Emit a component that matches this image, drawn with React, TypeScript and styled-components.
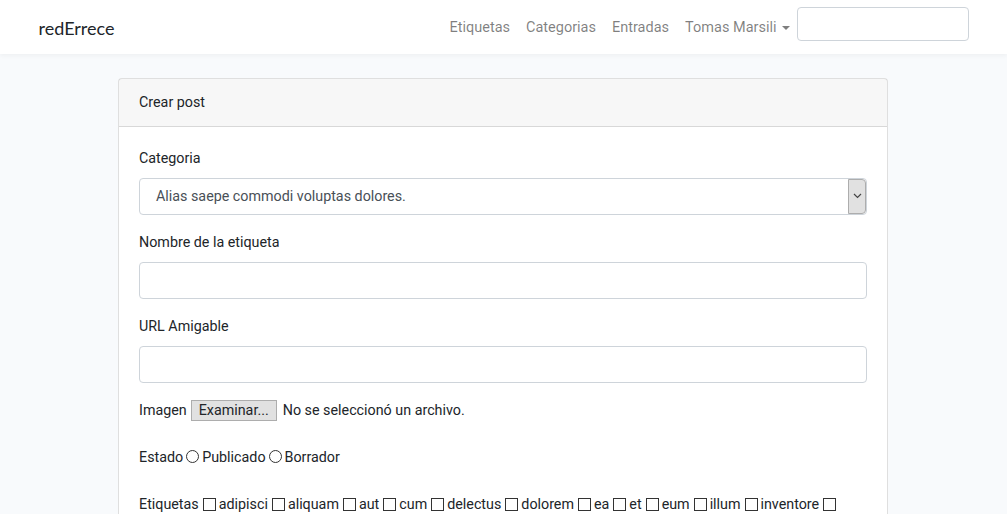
import { Fragment } from 'react'
import styled, { createGlobalStyle } from 'styled-components'

const GlobalStyle = createGlobalStyle`
  html, body {
    margin: 0;
    padding: 0;
  }
  body {
    background: #f8fafc;
    font-family: Roboto, "Liberation Sans", sans-serif;
    font-size: 14.3px;
    line-height: 1.6;
    color: #212529;
  }
  * {
    box-sizing: border-box;
  }
`

const NavBar = styled.nav`
  background: #fff;
  box-shadow: 0 2px 4px rgba(0, 0, 0, 0.04);
  height: 54px;
`

const NavContainer = styled.div`
  width: 960px;
  margin: 0 auto;
  padding: 0 15px;
  height: 100%;
  display: flex;
  align-items: center;
  justify-content: space-between;
`

const Brand = styled.a`
  font-family: Lato, "Noto Sans", sans-serif;
  font-size: 18px;
  color: #212529;
  text-decoration: none;
  padding-top: 2px;
`

const NavRight = styled.div`
  display: flex;
  align-items: center;
  padding-top: 1px;
`

const NavLink = styled.a`
  color: rgba(0, 0, 0, 0.5);
  padding: 0 8px;
  font-size: 14.5px;
  text-decoration: none;
  display: flex;
  align-items: center;
`

const Caret = styled.span`
  display: inline-block;
  margin-left: 5px;
  margin-right: -1px;
  width: 0;
  height: 0;
  border-top: 4.5px solid rgba(0, 0, 0, 0.5);
  border-left: 4.5px solid transparent;
  border-right: 4.5px solid transparent;
`

const SearchInput = styled.input`
  width: 172px;
  height: 34px;
  margin-top: -7px;
  border: 1px solid #ced4da;
  border-radius: 4px;
  background: #fff;
`

const Main = styled.main`
  padding-top: 24px;
  display: flex;
  justify-content: center;
`

const Card = styled.div`
  width: 770px;
  margin-right: 1px;
  background: #fff;
  border: 1px solid rgba(0, 0, 0, 0.125);
  border-radius: 4px;
`

const CardHeader = styled.div`
  background: rgba(0, 0, 0, 0.03);
  border-bottom: 1px solid rgba(0, 0, 0, 0.125);
  padding: 12px 20px;
  height: 48px;
`

const CardBody = styled.div`
  padding: 20px;
`

const FormGroup = styled.div`
  margin-bottom: 16px;
`

const Label = styled.label`
  display: block;
  margin-bottom: 8px;
`

const SelectBox = styled.div`
  position: relative;
  height: 37px;
  border: 1px solid #ced4da;
  border-radius: 4px;
  display: flex;
  align-items: center;
  padding-left: 16px;
  color: #495057;
`

const SelectArrow = styled.span`
  position: absolute;
  right: 0;
  top: 0;
  bottom: 0;
  width: 18px;
  background: #e1e1e1;
  border: 1px solid #adadad;
  border-radius: 0 4px 4px 0;
  display: flex;
  align-items: center;
  justify-content: center;
`

const TextInput = styled.input`
  display: block;
  width: 100%;
  height: 37px;
  border: 1px solid #ced4da;
  border-radius: 4px;
  background: #fff;
`

const InlineRow = styled.div`
  display: flex;
  align-items: center;
  flex-wrap: wrap;
  margin-bottom: 24px;
  white-space: nowrap;
`

const FileButton = styled.span`
  display: inline-flex;
  align-items: center;
  height: 21px;
  padding: 0 7px;
  margin: 0 6px 0 4px;
  background: #e1e1e1;
  border: 1px solid #adadad;
`

const Radio = styled.span`
  display: inline-block;
  width: 13px;
  height: 13px;
  border: 1px solid #333;
  border-radius: 50%;
  margin: 0 3px 0 3px;
`

const Check = styled.span`
  display: inline-block;
  width: 13px;
  height: 13px;
  border: 1px solid #333;
  margin: 1px 3px 0 4px;
`

const TagName = styled.span`
  padding-top: 1px;
`

const tags = [
  'adipisci', 'aliquam', 'aut', 'cum', 'delectus', 'dolorem', 'ea', 'et', 'eum',
  'illum', 'inventore', 'laudantium', 'magni', 'minus', 'nam', 'quia', 'sunt',
]

export default function App() {
  return (
    <>
      <GlobalStyle />
      <NavBar>
        <NavContainer>
          <Brand href="#">redErrece</Brand>
          <NavRight>
            <NavLink href="#">Etiquetas</NavLink>
            <NavLink href="#">Categorias</NavLink>
            <NavLink href="#">Entradas</NavLink>
            <NavLink href="#">
              Tomas Marsili
              <Caret />
            </NavLink>
            <SearchInput />
          </NavRight>
        </NavContainer>
      </NavBar>
      <Main>
        <Card>
          <CardHeader>Crear post</CardHeader>
          <CardBody>
            <FormGroup>
              <Label>Categoria</Label>
              <SelectBox>
                Alias saepe commodi voluptas dolores.
                <SelectArrow>
                  <svg width="9" height="6" viewBox="0 0 9 6">
                    <path d="M1 1 L4.5 4.5 L8 1" fill="none" stroke="#444" strokeWidth="1.2" />
                  </svg>
                </SelectArrow>
              </SelectBox>
            </FormGroup>
            <FormGroup>
              <Label>Nombre de la etiqueta</Label>
              <TextInput />
            </FormGroup>
            <FormGroup>
              <Label>URL Amigable</Label>
              <TextInput />
            </FormGroup>
            <InlineRow>
              Imagen
              <FileButton>Examinar...</FileButton>
              No se seleccionó un archivo.
            </InlineRow>
            <InlineRow>
              Estado<Radio />Publicado<Radio />Borrador
            </InlineRow>
            <InlineRow>
              <TagName>Etiquetas</TagName>
              {tags.map((t) => (
                <Fragment key={t}>
                  <Check />
                  <TagName>{t}</TagName>
                </Fragment>
              ))}
            </InlineRow>
          </CardBody>
        </Card>
      </Main>
    </>
  )
}
